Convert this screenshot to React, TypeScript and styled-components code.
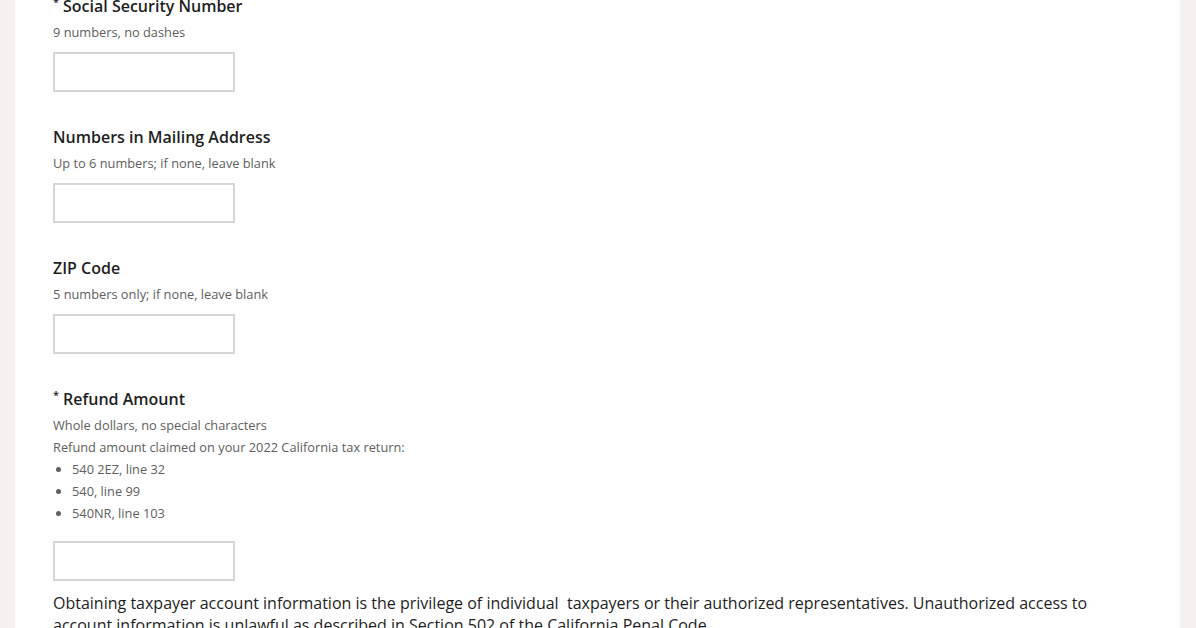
import React from 'react';
import styled, { createGlobalStyle } from 'styled-components';

const GlobalStyle = createGlobalStyle`
  html, body {
    margin: 0;
    padding: 0;
    background: #f3f2f0;
    overflow: hidden;
  }
`;

const Page = styled.div`
  height: 628px;
  margin: 0 16px 0 15px;
  background: #fefefe;
  overflow: hidden;
  font-family: 'Open Sans', 'Liberation Sans', sans-serif;
  color: #222;
`;

const Form = styled.div`
  margin-top: -7px;
  padding-left: 38px;
  display: flex;
  flex-direction: column;
`;

const Field = styled.div`
  display: flex;
  flex-direction: column;
  margin-bottom: 32px;
`;

const Label = styled.div`
  font-size: 16px;
  font-weight: 600;
  line-height: 26px;
  margin-bottom: 2px;
  color: #1f1f1f;
`;

const Star = styled.span`
  font-size: 11px;
  vertical-align: top;
  line-height: 18px;
  margin-right: 4px;
`;

const Hint = styled.div`
  font-size: 12.8px;
  line-height: 22px;
  color: #5f5f5f;
`;

const HintList = styled.ul`
  margin: 0;
  padding-left: 19px;
  font-size: 12.8px;
  line-height: 22px;
  color: #5f5f5f;
`;

const Input = styled.input<{ $top?: number }>`
  width: 182px;
  height: 40px;
  box-sizing: border-box;
  border: 2px solid #d6d6d6;
  background: #fff;
  margin-top: ${(p) => p.$top ?? 9}px;
`;

const Notice = styled.p`
  margin: -21px 0 0;
  font-size: 16px;
  line-height: 22px;
  color: #1f1f1f;
  max-width: 1060px;
`;

type FieldProps = {
  label: string;
  required?: boolean;
  hints: string[];
  bullets?: string[];
  top?: number;
};

const FormField = ({ label, required, hints, bullets, top }: FieldProps) => (
  <Field>
    <Label>
      {required && <Star>*</Star>}
      {label}
    </Label>
    {hints.map((h) => (
      <Hint key={h}>{h}</Hint>
    ))}
    {bullets && (
      <HintList>
        {bullets.map((b) => (
          <li key={b}>{b}</li>
        ))}
      </HintList>
    )}
    <Input type="text" $top={top} />
  </Field>
);

export default function App() {
  return (
    <>
      <GlobalStyle />
      <Page>
        <Form>
          <FormField label="Social Security Number" required hints={['9 numbers, no dashes']} />
          <FormField label="Numbers in Mailing Address" hints={['Up to 6 numbers; if none, leave blank']} />
          <FormField label="ZIP Code" hints={['5 numbers only; if none, leave blank']} />
          <FormField
            label="Refund Amount"
            required
            hints={['Whole dollars, no special characters', 'Refund amount claimed on your 2022 California tax return:']}
            bullets={['540 2EZ, line 32', '540, line 99', '540NR, line 103']}
            top={17}
          />
          <Notice>
            Obtaining taxpayer account information is the privilege of individual&nbsp; taxpayers or their authorized
            representatives. Unauthorized access to account information is unlawful as described in Section 502 of the
            California Penal Code.
          </Notice>
        </Form>
      </Page>
    </>
  );
}
